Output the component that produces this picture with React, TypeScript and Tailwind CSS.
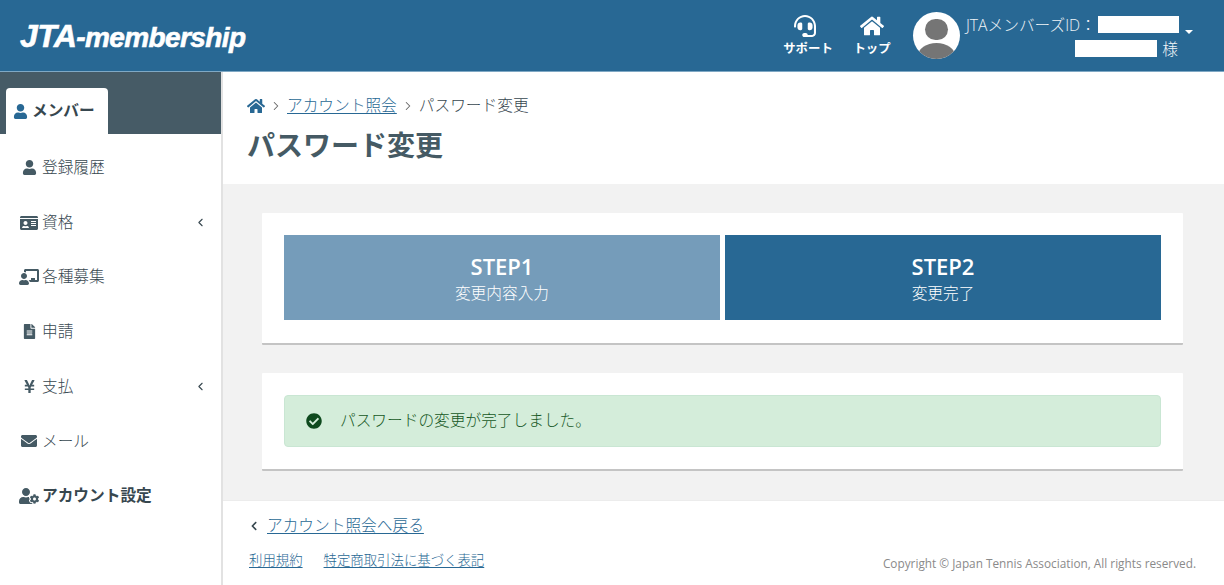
import React from "react";
import { FaUser, FaIdCard, FaChalkboardTeacher, FaFileAlt, FaYenSign, FaEnvelope, FaUserCog, FaHome, FaCheckCircle, FaHeadset, FaChevronLeft } from "react-icons/fa";
import { ChevronLeft, ChevronRight } from "lucide-react";

const font = { fontFamily: '"Open Sans","Noto Sans CJK JP",sans-serif' };

function NavItem({ icon, label, bold, chevron }: { icon: React.ReactNode; label: string; bold?: boolean; chevron?: boolean }) {
  return (
    <div className="flex h-[54.7px] items-center pl-[16px] pr-[14px] text-[#455a64]">
      <span className="flex w-[26px] justify-center">{icon}</span>
      <span className={bold ? "text-[15.7px] font-bold text-[#37474f]" : "text-[15.7px] font-light text-[#37474f]"}>{label}</span>
      {chevron && <ChevronLeft size={13} strokeWidth={2} className="ml-auto text-[#37474f]" />}
    </div>
  );
}

export default function App() {
  return (
    <div className="flex h-[585px] w-[1224px] flex-col overflow-hidden bg-white" style={font}>
      <header className="flex h-[71px] shrink-0 items-center bg-[#286894] text-white">
        <div className="ml-[20px] text-[32px] font-bold italic tracking-[-0.6px] [-webkit-text-stroke:0.6px_white]" style={{ fontFamily: '"Liberation Sans",sans-serif' }}>
          JTA<span className="text-[28px]">-membership</span>
        </div>
        <div className="ml-auto mr-[45px] flex items-center">
          <div className="flex w-[50px] flex-col items-center">
            <FaHeadset className="mr-[6px] text-[22px]" />
            <span className="mt-[4px] text-[12.4px] font-bold leading-[16px]">サポート</span>
          </div>
          <div className="ml-[14px] flex w-[50px] flex-col items-center">
            <FaHome className="text-[24px]" />
            <span className="mt-[3px] text-[12.4px] font-bold leading-[16px]">トップ</span>
          </div>
          <div className="relative ml-[16px] h-[47px] w-[47px] overflow-hidden rounded-full bg-white">
            <div className="absolute left-[12px] top-[7px] h-[21px] w-[23px] rounded-full bg-[#757575]" />
            <div className="absolute left-[5px] top-[31px] h-[26px] w-[37px] rounded-[50%] bg-[#757575]" />
          </div>
          <div className="ml-[6px] w-[213px] pt-[2px] text-[15.7px] font-light leading-[24px] text-[#f0f4f7]">
            <div className="flex items-center">
              <span>JTAメンバーズID：</span>
              <span className="ml-auto h-[17px] w-[81px] bg-white" />
            </div>
            <div className="flex items-center justify-end pr-[1px]">
              <span className="h-[17px] w-[82px] bg-white" />
              <span className="ml-[5px]">様</span>
            </div>
            <span className="absolute left-[1185px] top-[30px] h-0 w-0 border-x-[4px] border-t-[4px] border-x-transparent border-t-white" />
          </div>
        </div>
      </header>
      <div className="h-px shrink-0 bg-[#7fa8c4]" />
      <div className="flex min-h-0 flex-1">
        <aside className="w-[223px] shrink-0 border-r-2 border-[#e2e2e2] bg-white">
          <div className="flex h-[62px] items-end bg-[#465b66] pl-[6px]">
            <div className="flex h-[46px] w-[102px] items-center rounded-t-[4px] bg-white pl-[7px] text-[15.7px] font-bold text-[#37474f]">
              <FaUser className="mr-[4px] text-[15px] text-[#286894]" />
              メンバー
            </div>
          </div>
          <div className="pt-[6.5px]">
            <NavItem icon={<FaUser className="text-[15px]" />} label="登録履歴" />
            <NavItem icon={<FaIdCard className="text-[18px]" />} label="資格" chevron />
            <NavItem icon={<FaChalkboardTeacher className="text-[20px]" />} label="各種募集" />
            <NavItem icon={<FaFileAlt className="text-[15px]" />} label="申請" />
            <NavItem icon={<FaYenSign className="text-[15px]" />} label="支払" chevron />
            <NavItem icon={<FaEnvelope className="text-[16px]" />} label="メール" />
            <NavItem icon={<FaUserCog className="text-[20px]" />} label="アカウント設定" bold />
          </div>
        </aside>
        <main className="flex min-w-0 flex-1 flex-col">
          <div className="h-[112px] shrink-0 bg-white pl-[24px] pt-[22px]">
            <div className="flex h-[24px] items-center text-[15.7px] font-light text-[#37474f]">
              <FaHome className="text-[18px] text-[#286894]" />
              <ChevronRight size={14} strokeWidth={1.8} className="mx-[4px] text-[#666]" />
              <span className="text-[#286894] underline underline-offset-2">アカウント照会</span>
              <ChevronRight size={14} strokeWidth={1.8} className="mx-[4px] text-[#666]" />
              <span>パスワード変更</span>
            </div>
            <h1 className="mt-[9px] text-[28px] font-bold leading-[36px] text-[#455a64]">パスワード変更</h1>
          </div>
          <div className="flex-1 bg-[#f2f2f2] pl-[39px] pr-[41px] pt-[29px]">
            <div className="rounded-[1px] border-b-2 border-[#c4c4c4] bg-white px-[22px] pb-[23px] pt-[22px]">
              <div className="flex gap-[5px]">
                <div className="flex h-[85px] flex-1 flex-col items-center justify-center bg-[#759cba] text-white">
                  <span className="text-[22px] font-semibold leading-[30px]">STEP1</span>
                  <span className="text-[15.7px] font-light leading-[24px]">変更内容入力</span>
                </div>
                <div className="flex h-[85px] flex-1 flex-col items-center justify-center bg-[#286894] text-white">
                  <span className="text-[22px] font-semibold leading-[30px]">STEP2</span>
                  <span className="text-[15.7px] font-light leading-[24px]">変更完了</span>
                </div>
              </div>
            </div>
            <div className="mt-[28px] rounded-[1px] border-b-2 border-[#c4c4c4] bg-white p-[22px]">
              <div className="flex h-[52px] items-center rounded-[4px] border border-[#c9e6d3] bg-[#d4edda] pl-[21px] text-[15.7px] font-light text-[#155724]">
                <FaCheckCircle className="mr-[18px] text-[16px] text-[#0e4a1e]" />
                パスワードの変更が完了しました。
              </div>
            </div>
          </div>
          <footer className="relative h-[85px] shrink-0 border-t border-[#ececec] bg-white pl-[26px] pt-[13px]">
            <div className="flex h-[24px] items-center text-[15.7px] font-light">
              <FaChevronLeft className="mr-[8px] text-[10px] text-[#37474f]" />
              <span className="text-[#286894] underline underline-offset-2">アカウント照会へ戻る</span>
            </div>
            <div className="mt-[12px] flex gap-[21px] text-[13.4px] font-light leading-[20px] text-[#286894] underline underline-offset-2">
              <span>利用規約</span>
              <span>特定商取引法に基づく表記</span>
            </div>
            <span className="absolute bottom-[12px] right-[28px] text-[11.8px] text-[#8a8a8a]">Copyright © Japan Tennis Association, All rights reserved.</span>
          </footer>
        </main>
      </div>
    </div>
  );
}
